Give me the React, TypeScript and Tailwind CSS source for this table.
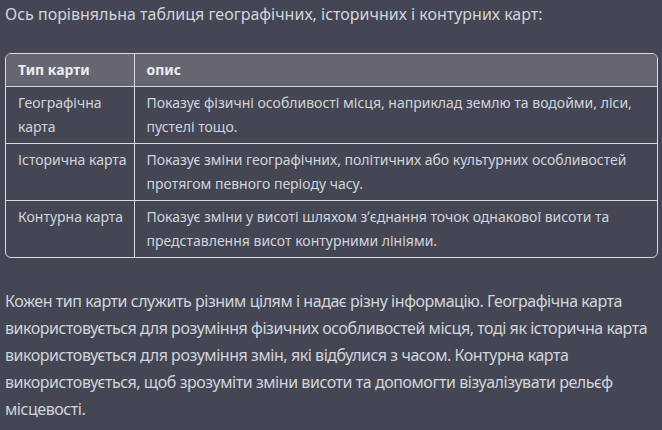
import React from 'react';

const rows = [
  {
    type: ['Географічна', 'карта'],
    desc: ['Показує фізичні особливості місця, наприклад землю та водойми, ліси,', 'пустелі тощо.'],
  },
  {
    type: ['Історична карта'],
    desc: ['Показує зміни географічних, політичних або культурних особливостей', 'протягом певного періоду часу.'],
  },
  {
    type: ['Контурна карта'],
    desc: ['Показує зміни у висоті шляхом з\u02BCєднання точок однакової висоти та', 'представлення висот контурними лініями.'],
  },
];

const summary = [
  'Кожен тип карти служить різним цілям і надає різну інформацію. Географічна карта',
  'використовується для розуміння фізичних особливостей місця, тоді як історична карта',
  'використовується для розуміння змін, які відбулися з часом. Контурна карта',
  'використовується, щоб зрозуміти зміни висоти та допомогти візуалізувати рельєф',
  'місцевості.',
];

export default function App() {
  return (
    <div
      className="w-[662px] h-[430px] overflow-hidden bg-[#444654] text-[#d1d5db] px-[5px]"
      style={{ fontFamily: '"Noto Sans", "Open Sans", sans-serif' }}
    >
      <p className="text-[16px] leading-[28px] whitespace-nowrap">
        Ось порівняльна таблиця географічних, історичних і контурних карт:
      </p>

      {/* comparison table */}
      <div className="mt-[25px] w-[653px] border border-[#d9d9e3] rounded-md overflow-hidden">
        <table className="w-full table-fixed border-collapse text-[14px] leading-[24px]">
          <colgroup>
            <col className="w-[128px]" />
            <col />
          </colgroup>
          <thead>
            <tr className="bg-[#656672]">
              <th className="px-3 py-1 text-left font-bold text-[#ececf1] border-r border-b border-[#d9d9e3]">
                Тип карти
              </th>
              <th className="px-3 py-1 text-left font-bold text-[#ececf1] border-b border-[#d9d9e3]">опис</th>
            </tr>
          </thead>
          <tbody>
            {rows.map((row, i) => (
              <tr key={i}>
                <td
                  className={`px-3 py-1 align-top border-r border-[#d9d9e3] ${i < rows.length - 1 ? 'border-b' : ''}`}
                >
                  {row.type.map((t) => (
                    <div key={t} className="whitespace-nowrap">{t}</div>
                  ))}
                  {row.type.length === 1 && <div>&nbsp;</div>}
                </td>
                <td className={`px-3 py-1 align-top border-[#d9d9e3] ${i < rows.length - 1 ? 'border-b' : ''}`}>
                  {row.desc.map((d) => (
                    <div key={d} className="whitespace-nowrap">{d}</div>
                  ))}
                </td>
              </tr>
            ))}
          </tbody>
        </table>
      </div>

      <p className="mt-[30px] text-[16px] leading-[27px] tracking-[-0.45px]">
        {summary.map((line) => (
          <span key={line} className="block whitespace-nowrap">{line}</span>
        ))}
      </p>
    </div>
  );
}
